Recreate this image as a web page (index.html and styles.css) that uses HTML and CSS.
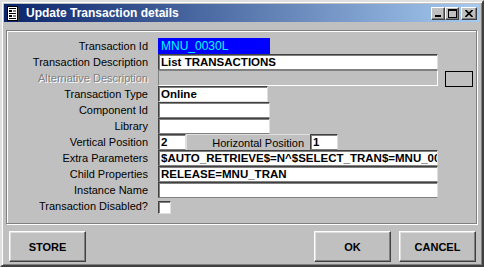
FILE: index.html
```html
<!DOCTYPE html>
<html lang="en">
<head>
    <meta charset="UTF-8">
    <title>Update Transaction details</title>
    <link rel="stylesheet" href="styles.css">
</head>
<body>
    <div class="window">
        <div class="titlebar">
            <svg class="app-icon" width="12" height="15" viewBox="0 0 12 15">
                <rect x="0.5" y="0.5" width="10" height="14" fill="#fff" stroke="#000"/>
                <rect x="2" y="2" width="7" height="1" fill="#000"/>
                <rect x="2" y="4" width="3" height="2" fill="#000"/>
                <rect x="6" y="4" width="3" height="2" fill="#808080"/>
                <rect x="2" y="7" width="7" height="1" fill="#000"/>
                <rect x="2" y="9" width="3" height="2" fill="#000"/>
                <rect x="6" y="9" width="3" height="2" fill="#808080"/>
                <rect x="2" y="12" width="7" height="1" fill="#000"/>
                <rect x="11" y="2" width="1" height="13" fill="#404040"/>
            </svg>
            <span class="title">Update Transaction details</span>
            <div class="controls">
                <span class="ctl"><svg width="8" height="7" viewBox="0 0 8 7"><rect x="1" y="5" width="6" height="2" fill="#000"/></svg></span>
                <span class="ctl"><svg width="9" height="9" viewBox="0 0 9 9"><rect x="0.5" y="1" width="8" height="7.5" fill="none" stroke="#000"/><rect x="0" y="0" width="9" height="2" fill="#000"/></svg></span>
                <span class="ctl ctl-close"><svg width="8" height="7" viewBox="0 0 8 7"><path d="M0.5 0 L7.5 7 M7.5 0 L0.5 7" stroke="#000" stroke-width="1.6"/></svg></span>
            </div>
        </div>

        <div class="panel">
            <div class="row">
                <label class="lbl">Transaction Id</label>
                <div class="field w-short selected">MNU_0030L</div>
            </div>
            <div class="row">
                <label class="lbl">Transaction Description</label>
                <div class="field w-long">List TRANSACTIONS</div>
            </div>
            <div class="row">
                <label class="lbl disabled">Alternative Description</label>
                <div class="field w-long off"></div>
                <div class="side-box"></div>
            </div>
            <div class="row">
                <label class="lbl">Transaction Type</label>
                <div class="field w-type plain">Online</div>
            </div>
            <div class="row">
                <label class="lbl">Component Id</label>
                <div class="field w-short"></div>
            </div>
            <div class="row">
                <label class="lbl">Library</label>
                <div class="field w-short"></div>
            </div>
            <div class="row">
                <label class="lbl">Vertical Position</label>
                <div class="field w-num">2</div>
                <span class="inline-lbl">Horizontal Position</span>
                <div class="field w-num">1</div>
            </div>
            <div class="row">
                <label class="lbl">Extra Parameters</label>
                <div class="field w-long">$AUTO_RETRIEVE$=N^$SELECT_TRAN$=MNU_0030L</div>
            </div>
            <div class="row">
                <label class="lbl">Child Properties</label>
                <div class="field w-long">RELEASE=MNU_TRAN</div>
            </div>
            <div class="row">
                <label class="lbl">Instance Name</label>
                <div class="field w-long"></div>
            </div>
            <div class="row">
                <label class="lbl">Transaction Disabled?</label>
                <span class="check"></span>
            </div>
        </div>

        <div class="actions">
            <button class="btn">STORE</button>
            <span class="spacer"></span>
            <button class="btn">OK</button>
            <button class="btn">CANCEL</button>
        </div>
    </div>
</body>
</html>
```

FILE: styles.css
```css
* {
    box-sizing: border-box;
}

body {
    margin: 0;
    background-color: #c0c0c0;
    font-family: "Liberation Sans", Arial, sans-serif;
    color: #000;
}

.window {
    width: 484px;
    height: 267px;
    padding: 2px 3px 2px 2px;
    border: 2px solid;
    border-color: #dfdfdf #404040 #404040 #dfdfdf;
    box-shadow: inset 1px 1px 0 #fff, inset -1px -1px 0 #808080;
    background-color: #c0c0c0;
}

/* title bar */
.titlebar {
    display: flex;
    align-items: center;
    height: 18px;
    padding: 0 2px 0 3px;
    background: linear-gradient(to right, #0a246a, #a6caf0);
    color: #fff;
}

.app-icon {
    margin-right: 7px;
}

.title {
    font-weight: bold;
    font-size: 12px;
}

.controls {
    display: flex;
    margin-left: auto;
}

.ctl {
    display: flex;
    align-items: center;
    justify-content: center;
    width: 14px;
    height: 13px;
    background-color: #c0c0c0;
    border: 1px solid;
    border-color: #fff #404040 #404040 #fff;
    box-shadow: inset -1px -1px 0 #808080;
}

.ctl-close {
    width: 16px;
    margin-left: 2px;
}

/* form panel */
.panel {
    margin: 8px 0 0 2px;
    width: 471px;
    height: 194px;
    padding-top: 7px;
    border: 1px solid #808080;
    box-shadow: inset 1px 1px 0 #fff, 1px 1px 0 #fff;
}

.row {
    display: flex;
    align-items: center;
    height: 16px;
}

.lbl {
    width: 141px;
    margin-right: 10px;
    text-align: right;
    font-size: 11px;
    white-space: nowrap;
}

.lbl.disabled {
    color: #808080;
    text-shadow: 1px 1px 0 #fff;
}

.field {
    height: 16px;
    padding: 1px 2px 0;
    background-color: #fff;
    border: 1px solid;
    border-color: #404040 #dfdfdf #808080 #404040;
    box-shadow: inset 1px 1px 0 #808080;
    font-size: 11.5px;
    font-weight: bold;
    line-height: 13px;
    white-space: nowrap;
    overflow: hidden;
}

.field.selected {
    background-color: #0000ff;
    color: #00ffff;
    font-weight: normal;
    font-size: 12px;
    border-color: #0000ff;
    box-shadow: none;
}

.field.off {
    background-color: #c0c0c0;
    border-color: #808080 #fff #fff #808080;
    box-shadow: none;
}

.field.plain {
    border-color: #404040 #dfdfdf #dfdfdf #404040;
}

.w-short { width: 112px; }
.w-type { width: 110px; }
.w-long { width: 280px; }
.w-num { width: 28px; }

.side-box {
    width: 28px;
    height: 16px;
    margin: 2px 0 0 7px;
    border: 1px solid #000;
}

.inline-lbl {
    width: 124px;
    height: 16px;
    padding-right: 6px;
    text-align: right;
    font-size: 11px;
    line-height: 16px;
    border-top: 1px solid #dfdfdf;
    border-left: 1px solid #dfdfdf;
}

.check {
    width: 13px;
    height: 13px;
    margin-top: 3px;
    background-color: #fff;
    border: 1px solid;
    border-color: #404040 #dfdfdf #dfdfdf #404040;
    box-shadow: inset 1px 1px 0 #808080;
}

/* buttons */
.actions {
    display: flex;
    gap: 8px;
    margin-top: 7px;
    padding: 0 3px 0 5px;
}

.spacer {
    flex: 1;
}

.btn {
    width: 77px;
    height: 31px;
    background-color: #c0c0c0;
    border: 1px solid;
    border-color: #fff #404040 #404040 #fff;
    box-shadow: inset -1px -1px 0 #808080, inset 1px 1px 0 #dfdfdf;
    font-family: "Liberation Sans", Arial, sans-serif;
    font-size: 11px;
    font-weight: bold;
    color: #000;
    cursor: pointer;
}
```
